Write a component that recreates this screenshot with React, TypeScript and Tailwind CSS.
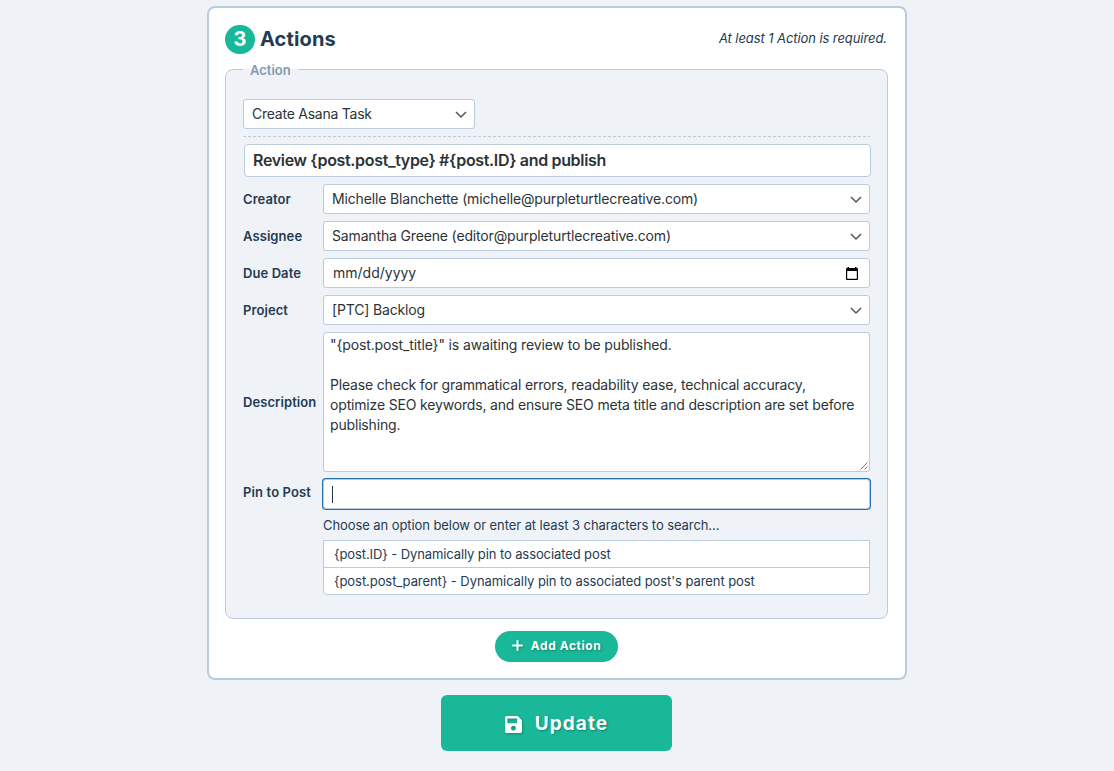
import type { ReactNode } from "react";

function Chevron() {
  return (
    <svg viewBox="0 0 16 16" className="mt-0.5 h-4 w-4 shrink-0" aria-hidden="true">
      <path d="M3 5l5 5 5-5" fill="none" stroke="#555" strokeWidth="1.5" />
    </svg>
  );
}

function Select({ value, className = "tracking-[-0.155px]" }: { value: string; className?: string }) {
  return (
    <div
      className={`flex h-[30px] items-center justify-between rounded-[3px] border border-[#bacbde] bg-white pr-[5px] pl-2 text-sm text-[#2c3338] ${className}`}
    >
      <span>{value}</span>
      <Chevron />
    </div>
  );
}

function Row({ label, children }: { label: string; children: ReactNode }) {
  return (
    <div className="flex items-center">
      <div className="w-20 shrink-0 pb-px text-[13px] leading-5 font-semibold tracking-[0.08px]">{label}</div>
      <div className="w-[547px]">{children}</div>
    </div>
  );
}

function CalendarIcon() {
  return (
    <svg viewBox="0 0 12 13" className="mr-[11px] h-[13px] w-3" aria-hidden="true">
      <path
        d="M1.5 0h1.5v1h6V0h1.5v1H11a1 1 0 0 1 1 1v10a1 1 0 0 1-1 1H1a1 1 0 0 1-1-1V2a1 1 0 0 1 1-1h.5zM1.2 4v7.8h9.6V4z"
        fill="#000"
        fillRule="evenodd"
      />
    </svg>
  );
}

export default function App() {
  return (
    <main className="flex h-[771px] flex-col items-center bg-[#eff3f8] pt-1.5 font-['Inter',sans-serif] text-[13px] text-[#243b53]">
      <section className="flex h-[674px] w-[700px] flex-col rounded-lg border-2 border-[#bacbde] bg-white pr-[17px] pl-4">
        <header className="flex h-[53px] items-center justify-between pt-[9px]">
          <h2 className="flex items-center gap-[5px] text-xl font-bold tracking-[0.15px]">
            <span className="flex h-[29px] w-[30px] items-center justify-center rounded-full bg-[#18b899] text-white">
              3
            </span>
            Actions
          </h2>
          <em className="pr-px tracking-[-0.08px]">At least 1 Action is required.</em>
        </header>

        <fieldset className="h-[558px] min-w-0 rounded-lg border border-[#bacbde] bg-[#eff3f8] pr-4 pl-[17px]">
          <legend className="h-[17px] px-[7px] leading-[19px] font-semibold text-[#829ab1]">Action</legend>
          <div className="flex flex-col pt-[21px]">
            <Select value="Create Asana Task" className="w-[232px] tracking-[-0.24px]" />
            <svg className="mt-[7px] h-px w-[627px]" aria-hidden="true">
              <line x1="0" y1="0.5" x2="627" y2="0.5" stroke="#bacbde" strokeDasharray="3 2" />
            </svg>
            <div className="mt-[7px] ml-px flex h-[33px] w-[627px] items-center rounded-[4px] border border-[#bacbde] bg-white px-2 pb-px text-base font-semibold tracking-[-0.33px] text-[#2c3338]">
              Review {"{post.post_type}"} #{"{post.ID}"} and publish
            </div>
            <div className="mt-[7px] flex flex-col gap-[7px]">
              <Row label="Creator">
                <Select value="Michelle Blanchette (michelle@purpleturtlecreative.com)" />
              </Row>
              <Row label="Assignee">
                <Select value="Samantha Greene (editor@purpleturtlecreative.com)" />
              </Row>
              <Row label="Due Date">
                <div className="flex h-[30px] items-center justify-between rounded-[3px] border border-[#bacbde] bg-white pl-[9px] text-sm text-[#2c3338]">
                  <span>mm/dd/yyyy</span>
                  <CalendarIcon />
                </div>
              </Row>
              <Row label="Project">
                <Select value="[PTC] Backlog" />
              </Row>
              <Row label="Description">
                <div className="relative h-[140px] rounded-[3px] border border-[#bacbde] bg-white px-1.5 pt-0.5 text-sm leading-5 text-[#2c3338]">
                  <p className="tracking-[-0.13px]">"{"{post.post_title}"}" is awaiting review to be published.</p>
                  <p className="mt-5 tracking-[-0.17px]">
                    Please check for grammatical errors, readability ease, technical accuracy,
                    <br />
                    optimize SEO keywords, and ensure SEO meta title and description are set before
                    <br />
                    publishing.
                  </p>
                  <svg viewBox="0 0 8 8" className="absolute right-px bottom-px h-2 w-2" aria-hidden="true">
                    <path d="M.5 7.5l7-7M4.5 7.5l3-3" stroke="#555" strokeWidth=".8" />
                  </svg>
                </div>
              </Row>
            </div>
            <div className="mt-[7px] flex">
              <div className="w-20 pt-[3px] leading-5 font-semibold tracking-[0.13px]">Pin to Post</div>
              <div className="w-[547px]">
                <div className="flex h-[30px] items-center rounded-[3px] border border-[#bacbde] bg-white pl-2 shadow-[0_0_0_1px_#2271b1]">
                  <span className="h-[17px] w-px bg-[#2c3338]" />
                </div>
                <p className="mt-1.5 h-[25px] leading-5 tracking-[-0.08px]">
                  Choose an option below or enter at least 3 characters to search...
                </p>
                <ul className="divide-y divide-[#bacbde] rounded-b-[4px] border border-[#bacbde] bg-white leading-[26px]">
                  <li className="h-[27px] px-2.5 tracking-[-0.1px]">
                    {"{post.ID}"} - Dynamically pin to associated post
                  </li>
                  <li className="h-[26px] px-2.5 tracking-[-0.07px]">
                    {"{post.post_parent}"} - Dynamically pin to associated post's parent post
                  </li>
                </ul>
              </div>
            </div>
          </div>
        </fieldset>

        <button className="mt-3 ml-[270px] flex h-[31px] w-[123px] items-center justify-center gap-2 rounded-full bg-[#18b899] pb-0.5 text-xs font-bold tracking-[0.55px] text-white [text-shadow:1px_1px_2px_rgba(0,0,0,0.3)]">
          <svg viewBox="0 0 11 11" className="h-[11px] w-[11px] drop-shadow-[1px_1px_1px_rgba(0,0,0,0.25)]" aria-hidden="true">
            <path d="M5.5 1v9M1 5.5h9" stroke="#fff" strokeWidth="2" strokeLinecap="round" />
          </svg>
          Add Action
        </button>
      </section>

      <button className="mt-[15px] mr-px flex h-14 w-[231px] items-center justify-center gap-[13px] rounded-md bg-[#18b899] pt-0.5 text-[19px] font-bold tracking-[1.1px] text-white [text-shadow:1px_1px_2px_rgba(0,0,0,0.3)]">
        <svg viewBox="0 32 448 448" className="h-[17px] w-[17px] drop-shadow-[1px_1px_1px_rgba(0,0,0,0.25)]" aria-hidden="true">
          <path
            d="M433.941 129.941l-83.882-83.882A48 48 0 0 0 316.118 32H48C21.49 32 0 53.49 0 80v352c0 26.51 21.49 48 48 48h352c26.51 0 48-21.49 48-48V163.882a48 48 0 0 0-14.059-33.941zM224 416c-35.346 0-64-28.654-64-64 0-35.346 28.654-64 64-64s64 28.654 64 64c0 35.346-28.654 64-64 64zm96-304.52V212c0 6.627-5.373 12-12 12H76c-6.627 0-12-5.373-12-12V108c0-6.627 5.373-12 12-12h228.52c3.183 0 6.235 1.264 8.485 3.515l3.48 3.48A11.996 11.996 0 0 1 320 111.48z"
            fill="#fff"
          />
        </svg>
        Update
      </button>
    </main>
  );
}
